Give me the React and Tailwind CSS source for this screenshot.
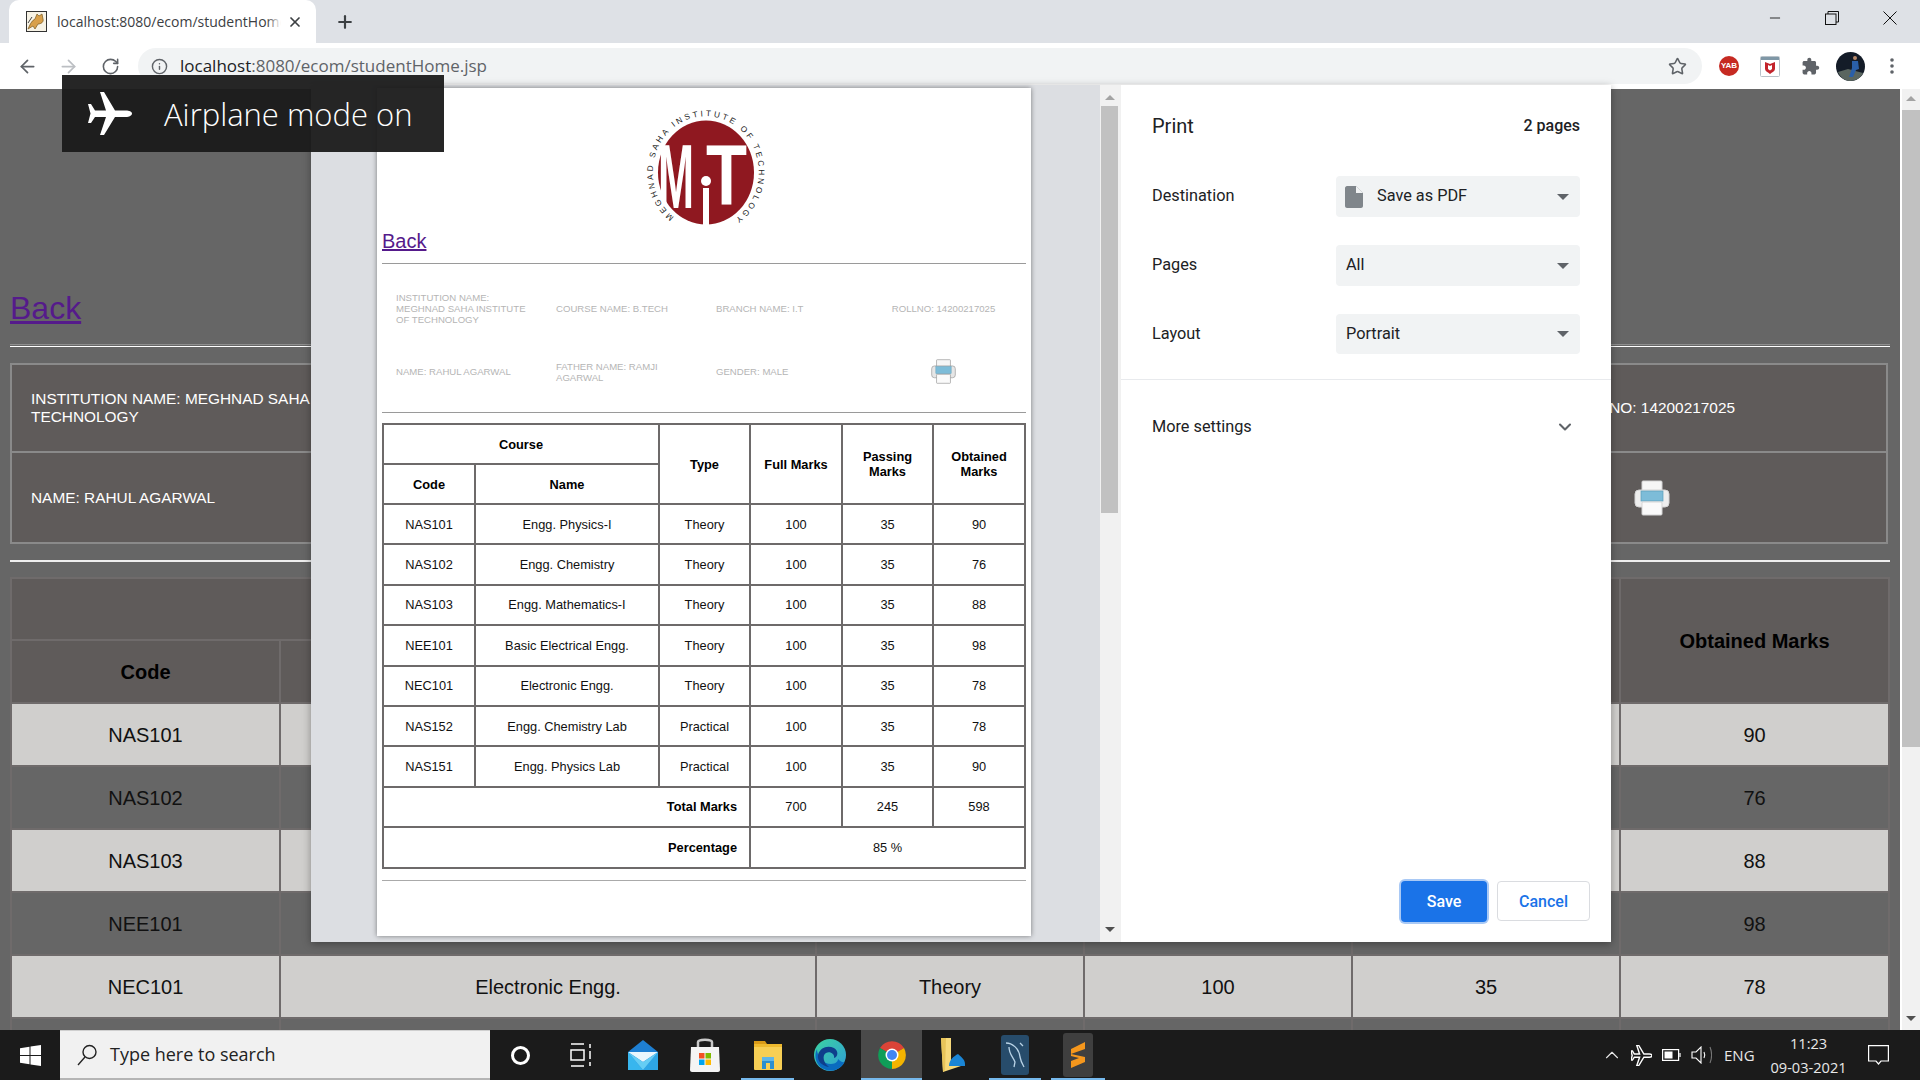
import React from "react";
import { ArrowLeft, ArrowRight, RotateCw, Info, Star, X, Plus, Minus, ChevronDown, ChevronUp } from "lucide-react";

const rows = [
  ["NAS101", "Engg. Physics-I", "Theory", "100", "35", "90"],
  ["NAS102", "Engg. Chemistry", "Theory", "100", "35", "76"],
  ["NAS103", "Engg. Mathematics-I", "Theory", "100", "35", "88"],
  ["NEE101", "Basic Electrical Engg.", "Theory", "100", "35", "98"],
  ["NEC101", "Electronic Engg.", "Theory", "100", "35", "78"],
  ["NAS152", "Engg. Chemistry Lab", "Practical", "100", "35", "78"],
  ["NAS151", "Engg. Physics Lab", "Practical", "100", "35", "90"],
];

const planePath =
  "M44 21.5C44 19.5 41 18.5 38 18.5H27L16 0H12L18 18.5H7L3 12H0L2.5 21.5L0 31H3L7 25H18L12 43H16L27 25H38C41 25 44 23.5 44 21.5Z";

function PrinterIcon({ size, outline }) {
  const s = outline ? "#9a9a9a" : "#d5d5d5";
  return (
    <svg width={size} height={size} viewBox="0 0 36 36">
      <rect x="8" y="1" width="20" height="12" rx="1" fill="#f6f6f6" stroke={s} strokeWidth="1" />
      <rect x="1" y="10" width="34" height="17" rx="4" fill={outline ? "#e6e6e6" : "#eeeeee"} stroke={s} strokeWidth="1" />
      <rect x="7" y="11" width="22" height="10" fill="#7dbcd8" stroke="#5b9db9" strokeWidth="0.7" />
      <rect x="8" y="22" width="20" height="13" rx="1" fill="#fafafa" stroke={s} strokeWidth="1" />
    </svg>
  );
}

function Logo() {
  return (
    <svg width="150" height="135" viewBox="0 0 150 135" className="block mx-auto overflow-visible">
      <defs>
        <path id="ringPath" d="M45 117A53 56 0 1 1 101 122" />
      </defs>
      <ellipse cx="77" cy="72.5" rx="48" ry="52" fill="#8f1820" />
      <text x="29" y="108" fill="#ffffff" fontFamily="'Liberation Sans'" fontWeight="700" fontSize="91" textLength="36" lengthAdjust="spacingAndGlyphs">M</text>
      <text x="77" y="104" fill="#ffffff" fontFamily="'Liberation Sans'" fontWeight="700" fontSize="86" textLength="41" lengthAdjust="spacingAndGlyphs">T</text>
      <circle cx="77" cy="81" r="5" fill="#ffffff" />
      <rect x="74" y="88" width="6" height="37" fill="#ffffff" />
      <text fontFamily="'Liberation Sans'" fontSize="8.2" fill="#222222">
        <textPath href="#ringPath" textLength="276">MEGHNAD SAHA INSTITUTE OF TECHNOLOGY</textPath>
      </text>
    </svg>
  );
}

function TomcatFavicon() {
  return (
    <svg width="21" height="21" viewBox="0 0 21 21">
      <rect x="0.5" y="0.5" width="20" height="20" fill="#f7f3e6" stroke="#333" />
      <path d="M2 18C4 14 5 10 9 8L11 3L13 5L16 3L17 8C18 11 15 13 12 13L9 18L7 15Z" fill="#d9a04a" stroke="#7a5a22" strokeWidth="0.7" />
      <path d="M2 12L6 6" stroke="#444" strokeWidth="1" />
    </svg>
  );
}

function Dropdown({ label, value, file, tall }) {
  return (
    <div className={`flex items-center ${tall}`}>
      <div className="w-[184px] text-[16.3px] text-[#202124]">{label}</div>
      <div className="w-[244px] h-full rounded-[4px] bg-[#f1f3f4] flex items-center pl-[10px] pr-[11px] text-[16.3px] text-[#202124]">
        {file && (
          <svg width="18" height="22" viewBox="0 0 18 22" className="mr-[14px] -ml-[1px]">
            <path d="M2 0H11L18 7V20C18 21 17 22 16 22H2C1 22 0 21 0 20V2C0 1 1 0 2 0Z" fill="#80868b" />
            <path d="M11 0V7H18Z" fill="#f1f3f4" />
          </svg>
        )}
        <span className="flex-1">{value}</span>
        <svg width="12" height="6" viewBox="0 0 12 6"><path d="M0 0H12L6 6Z" fill="#5f6368" /></svg>
      </div>
    </div>
  );
}

function TaskIcon({ width = "w-[61px]", children, active, line }) {
  return (
    <div className={`relative h-full flex items-center justify-center ${width} ${active ? "bg-[#4a4a4a]" : ""}`}>
      {children}
      {line && <div className="absolute bottom-0 left-[5px] right-[5px] h-[2px] bg-[#76b9ed]" />}
    </div>
  );
}

export default function App() {
  const ui = "font-['Open_Sans',sans-serif]";
  const roboto = "font-['Roboto',sans-serif]";
  const hdr = "border-2 border-[#6f6b6b] bg-[#5f5b5a] text-[20px] font-bold text-black text-center";
  const thP = "border-2 border-[#6d6a6a] font-bold text-center text-black leading-[15px] p-0";
  const tdP = "border-2 border-[#6d6a6a] text-center text-[#111] p-0";

  return (
    <div className="relative w-[1920px] h-[1080px] overflow-hidden flex flex-col bg-white font-['Liberation_Sans',Arial,sans-serif]">
      {/* Tab strip */}
      <div className={`h-[43px] bg-[#dee1e6] flex items-stretch shrink-0 ${ui}`}>
        <div className="ml-[9px] w-[307px] bg-white rounded-t-[10px] flex items-center pl-[17px] pr-[11px]">
          <TomcatFavicon />
          <div className="relative ml-[10px] w-[224px] overflow-hidden whitespace-nowrap text-[14px] text-[#3c4043]">
            localhost:8080/ecom/studentHome.jsp
            <div className="absolute right-0 top-0 bottom-0 w-[14px] bg-gradient-to-r from-transparent to-white" />
          </div>
          <X size={16} strokeWidth={2.6} className="ml-[6px] text-[#3c4043]" />
        </div>
        <div className="ml-[19px] flex items-center"><Plus size={20} strokeWidth={2.6} className="text-[#3c4043]" /></div>
        <div className="flex-1" />
        <div className="flex items-center text-[#111] pb-[7px]">
          <Minus size={16} strokeWidth={1.3} className="mr-[42px]" />
          <svg width="14" height="14" viewBox="0 0 14 14" className="mr-[44px]" fill="none" stroke="#111"><rect x="0.5" y="3" width="10.5" height="10.5" /><path d="M3 3V0.5H13.5V11H11" /></svg>
          <svg width="14" height="14" viewBox="0 0 14 14" className="mr-[23px]" stroke="#111"><path d="M0.5 0.5L13.5 13.5M13.5 0.5L0.5 13.5" /></svg>
        </div>
      </div>
      {/* Toolbar */}
      <div className={`h-[46px] bg-white flex items-center shrink-0 ${ui}`}>
        <ArrowLeft size={21} className="ml-[17px] text-[#5f6368]" />
        <ArrowRight size={21} className="ml-[20px] text-[#bcbfc3]" />
        <RotateCw size={19} className="ml-[22px] text-[#5f6368]" />
        <div className="ml-[18px] w-[1564px] h-[36px] rounded-full bg-[#f1f3f4] flex items-center pl-[13px] pr-[15px]">
          <Info size={17} className="text-[#5f6368]" />
          <span className="ml-[12px] flex-1 text-[17px] text-[#5f6368]"><span className="text-[#202124]">localhost</span>:8080/ecom/studentHome.jsp</span>
          <Star size={19} className="text-[#5f6368]" />
        </div>
        <div className="ml-[17px] w-[20px] h-[20px] rounded-full bg-[#c62a22] text-white text-[8px] font-bold flex items-center justify-center font-['Liberation_Sans']">YAB</div>
        <svg width="20" height="21" viewBox="0 0 20 21" className="ml-[21px]">
          <rect x="0.5" y="0.5" width="19" height="20" rx="1" fill="#fff" stroke="#b9c2c9" />
          <rect x="1" y="1" width="18" height="3" fill="#7f97a6" />
          <path d="M5 6L10 8L15 6V13C15 15 12 16.5 10 18C8 16.5 5 15 5 13Z" fill="#c3242c" />
          <path d="M8 9L10 10L12 9V13L10 14.5L8 13Z" fill="#fff" />
        </svg>
        <svg width="19" height="19" viewBox="0 0 24 24" className="ml-[21px]" fill="#5f6368"><path d="M20.5 11H19V7c0-1.1-.9-2-2-2h-4V3.5C13 2.12 11.88 1 10.5 1S8 2.12 8 3.5V5H4c-1.1 0-1.99.9-1.99 2v3.8H3.5c1.49 0 2.7 1.21 2.7 2.7s-1.21 2.7-2.7 2.7H2V20c0 1.1.9 2 2 2h3.8v-1.5c0-1.49 1.21-2.7 2.7-2.7 1.49 0 2.7 1.21 2.7 2.7V22H17c1.1 0 2-.9 2-2v-4h1.5c1.38 0 2.5-1.12 2.5-2.5S21.88 11 20.5 11z" /></svg>
        <svg width="29" height="29" viewBox="0 0 29 29" className="ml-[16px]">
          <circle cx="14.5" cy="14.5" r="14.5" fill="#141c28" />
          <path d="M2 20L12 17L27 21C25 26 19 29 14 29C9 29 4 25 2 20Z" fill="#5a6660" />
          <circle cx="19" cy="6" r="2" fill="#b98a6a" />
          <path d="M16 9H22L23 17L20 18L17 25H13L16 16Z" fill="#2a5fa8" />
        </svg>
        <svg width="4" height="16" viewBox="0 0 4 16" className="ml-[25px]" fill="#5f6368"><circle cx="2" cy="2" r="1.8" /><circle cx="2" cy="8" r="1.8" /><circle cx="2" cy="14" r="1.8" /></svg>
      </div>

      {/* Page */}
      <div className="flex-1 min-h-0 flex bg-[#666666]">
        <div className="w-[1900px] h-[941px] overflow-hidden px-[10px] pt-[201px]">
          <a className="block text-[32px] leading-[37px] text-[#551a8b] underline decoration-[3px]">Back</a>
          <div className="mt-[17px] w-[1880px] h-[3px] border-t border-b border-t-[#8f8f8f] border-b-white" />
          <table className="mt-[16px] w-[1878px] table-fixed border-collapse border-2 border-[#8a8a8a] bg-[#5f5b5a] text-white text-[15.4px] leading-[18px]">
            <tbody>
              <tr className="h-[88px] border-b-2 border-[#8a8a8a]">
                <td className="pl-[19px] pr-[10px]">INSTITUTION NAME: MEGHNAD SAHA INSTITUTE OF TECHNOLOGY</td>
                <td className="pl-[19px]">COURSE NAME: B.TECH</td>
                <td className="pl-[19px]">BRANCH NAME: I.T</td>
                <td className="text-center">ROLLNO: 14200217025</td>
              </tr>
              <tr className="h-[91px]">
                <td className="pl-[19px]">NAME: RAHUL AGARWAL</td>
                <td className="pl-[19px]">FATHER NAME: RAMJI AGARWAL</td>
                <td className="pl-[19px]">GENDER: MALE</td>
                <td><div className="flex justify-center"><PrinterIcon size={36} /></div></td>
              </tr>
            </tbody>
          </table>
          <div className="mt-[16px] w-[1880px] h-[2px] bg-[#eeeeee]" />
          <table className="mt-[15px] w-[1878px] table-fixed border-collapse">
            <colgroup>
              <col className="w-[269px]" /><col className="w-[536px]" /><col className="w-[268px]" /><col className="w-[268px]" /><col className="w-[268px]" /><col className="w-[269px]" />
            </colgroup>
            <tbody>
              <tr className="h-[62px]">
                <td colSpan={2} className={hdr}>Course</td>
                <td rowSpan={2} className={hdr}>Type</td>
                <td rowSpan={2} className={hdr}>Full Marks</td>
                <td rowSpan={2} className={hdr}>Passing Marks</td>
                <td rowSpan={2} className={hdr}>Obtained Marks</td>
              </tr>
              <tr className="h-[63px]">
                <td className={hdr}>Code</td>
                <td className={hdr}>Name</td>
              </tr>
              {rows.map((r, i) => (
                <tr key={r[0]} className={`h-[63px] text-[20px] text-center text-[#111] ${i % 2 === 0 ? "bg-[#d0cfcd]" : "bg-[#666666]"}`}>
                  {r.map((c, j) => (
                    <td key={j} className="border-2 border-[#6f6b6b]">{c}</td>
                  ))}
                </tr>
              ))}
            </tbody>
          </table>
        </div>
        <div className="w-[2px] bg-white" />
        <div className="w-[18px] bg-[#f1f1f1] flex flex-col items-center pt-[7px]">
          <svg width="10" height="5" viewBox="0 0 10 5"><path d="M5 0L10 5H0Z" fill="#a3a3a3" /></svg>
          <div className="mt-[9px] w-full h-[637px] bg-[#c1c1c1]" />
          <svg width="10" height="5" viewBox="0 0 10 5" className="mt-[269px]"><path d="M0 0H10L5 5Z" fill="#505050" /></svg>
        </div>
      </div>

      {/* Taskbar */}
      <div className={`h-[50px] shrink-0 bg-[#1b1b1b] flex items-center text-white ${ui}`}>
        <div className="w-[60px] h-full flex items-center justify-center">
          <svg width="21" height="21" viewBox="0 0 21 21" fill="#fff"><path d="M0 3.2L9.5 1.8V10H0ZM10.5 1.6L21 0V10H10.5ZM0 11H9.5V19.2L0 17.8ZM10.5 11H21V21L10.5 19.4Z" /></svg>
        </div>
        <div className="w-[430px] h-full bg-[#f1f1f1] border-t border-b-2 border-t-[#cfcfcf] border-b-[#b5b5b5] flex items-center pl-[15px] text-[18px] text-[#222]">
          <svg width="24" height="24" viewBox="0 0 24 24" fill="none" stroke="#222" strokeWidth="1.4"><circle cx="14.5" cy="9" r="6.5" /><path d="M10 14L3 22" /></svg>
          <span className="ml-[11px]">Type here to search</span>
        </div>
        <div className="w-[370px] flex h-full ml-[1px]">
          <TaskIcon width="w-[59px]"><div className="w-[19px] h-[19px] rounded-full border-[3px] border-white" /></TaskIcon>
          <TaskIcon width="w-[62px]">
            <svg width="22" height="24" viewBox="0 0 22 24" fill="none" stroke="#fff" strokeWidth="1.5"><path d="M1 1H14M1 23H14M1 7H14V17H1ZM20 1V5M20 8V16M20 19V23" /></svg>
          </TaskIcon>
          <TaskIcon width="w-[62px]">
            <svg width="30" height="30" viewBox="0 0 30 30">
              <path d="M15 0L30 12V30H0V12Z" fill="#1e7fd2" />
              <path d="M0 12H30L15 22Z" fill="#eaf6fd" />
              <path d="M0 12L15 30H0Z" fill="#38b6ee" />
              <path d="M30 12V30H15Z" fill="#2ea6e6" />
              <path d="M15 22L30 12L15 30L0 12Z" fill="#65cdf4" />
            </svg>
          </TaskIcon>
          <TaskIcon width="w-[62px]">
            <svg width="30" height="34" viewBox="0 0 30 34">
              <path d="M8 10V4C8 1 22 1 22 4V10" fill="none" stroke="#c9c9c9" strokeWidth="2.5" />
              <path d="M1 9H29L30 32C30 33 29 34 28 34H2C1 34 0 33 0 32Z" fill="#f4f4f4" />
              <rect x="9" y="15" width="5.5" height="5.5" fill="#f25022" /><rect x="15.5" y="15" width="5.5" height="5.5" fill="#7fba00" /><rect x="9" y="21.5" width="5.5" height="5.5" fill="#00a4ef" /><rect x="15.5" y="21.5" width="5.5" height="5.5" fill="#ffb900" />
            </svg>
          </TaskIcon>
          <TaskIcon width="w-[63px]" line>
            <svg width="28" height="30" viewBox="0 0 28 30">
              <path d="M0 1H11L13 4H0Z" fill="#d99a17" />
              <rect x="0" y="4" width="28" height="26" rx="1" fill="#f7cf55" />
              <rect x="0" y="4" width="28" height="3" fill="#eeb92e" />
              <path d="M8 19H20V29H16V23H12V29H8Z" fill="#2a8fd0" />
              <rect x="8" y="17" width="12" height="4" fill="#5fb6e8" />
            </svg>
          </TaskIcon>
          <TaskIcon width="w-[62px]">
            <svg width="32" height="32" viewBox="0 0 32 32">
              <defs>
                <linearGradient id="edgeA" x1="0" y1="0" x2="1" y2="1"><stop offset="0" stopColor="#3bd4a0" /><stop offset="1" stopColor="#2f9bd8" /></linearGradient>
              </defs>
              <circle cx="16" cy="16" r="16" fill="url(#edgeA)" />
              <path d="M31 22C28 30 18 34 10 30C3 27 -1 18 3 10C3 17 9 25 17 25C22 25 24 22 24 20C28 24 30 24 31 22Z" fill="#0a6bbf" />
              <path d="M4 16C6 8 14 6 20 9C25 12 24 18 20 19C21 15 16 12 12 14C8 16 9 24 15 28C8 27 3 22 4 16Z" fill="#0e3f8c" />
            </svg>
          </TaskIcon>
        </div>
        <TaskIcon width="w-[61px]" active>
          <svg width="28" height="28" viewBox="0 0 28 28">
            <path d="M14 14L2 7A14 14 0 0 1 26 7Z" fill="#db4437" />
            <path d="M14 14L26 7A14 14 0 0 1 14 28Z" fill="#f4b400" />
            <path d="M14 14L14 28A14 14 0 0 1 2 7Z" fill="#0f9d58" />
            <circle cx="14" cy="14" r="6.5" fill="#fff" />
            <circle cx="14" cy="14" r="5" fill="#4285f4" />
          </svg>
          <div className="absolute bottom-0 left-0 right-0 h-[2px] bg-[#76b9ed]" />
        </TaskIcon>
        <TaskIcon width="w-[62px]">
          <svg width="28" height="34" viewBox="0 0 28 34">
            <path d="M2 0H12V22L22 22V28L4 34Z" fill="#f7d97a" />
            <path d="M2 0H7L6 32L4 34Z" fill="#e8c45a" />
            <path d="M10 28C10 22 15 18 19 16C21 18 26 21 26 26V28Z" fill="#1b86d6" />
          </svg>
        </TaskIcon>
        <TaskIcon width="w-[62px]" line>
          <div className="w-[28px] h-[40px] rounded-[3px] bg-[#274c6b] flex items-center justify-center">
            <svg width="22" height="30" viewBox="0 0 22 30" fill="none" stroke="#b9d3e6" strokeWidth="1.3"><path d="M2 3C8 3 15 8 16 17C17 22 19 25 20 27M16 3L19 6M5 7C5 14 9 17 11 22L10 27" /></svg>
          </div>
        </TaskIcon>
        <TaskIcon width="w-[64px]" line>
          <div className="w-[30px] h-[44px] rounded-[3px] bg-[#3f3f3f] flex items-center justify-center">
            <svg width="16" height="26" viewBox="0 0 16 26"><path d="M15 0V7L1 12V7ZM1 12L15 15V20L1 26V19L9 16L1 14Z" fill="#f5971d" /></svg>
          </div>
        </TaskIcon>
        <div className="flex-1 h-full flex items-center text-[#e8e8e8]">
          <ChevronUp size={22} strokeWidth={1.2} className="ml-[491px]" />
          <svg width="21" height="21" viewBox="0 0 44 43" className="ml-[8px]" fill="none" stroke="#fff" strokeWidth="3"><path d={planePath} /></svg>
          <svg width="19" height="12" viewBox="0 0 19 12" className="ml-[10px]" fill="none" stroke="#fff" strokeWidth="1.2"><rect x="0.6" y="0.6" width="16" height="10.8" /><rect x="2.5" y="2.5" width="8" height="7" fill="#fff" stroke="none" /><path d="M18 4V8" /></svg>
          <svg width="21" height="18" viewBox="0 0 21 18" className="ml-[10px]" fill="none" stroke="#fff" strokeWidth="1.1"><path d="M1 6H5L10 1V17L5 12H1Z" /><path d="M13 6C14 8 14 10 13 12" /><path d="M19 1C21 6 21 12 19 17" stroke="#777" /></svg>
          <span className="ml-[12px] text-[15px]">ENG</span>
          <div className="ml-[13px] w-[82px] text-center text-[14.6px] leading-[24px]">11:23<br />09-03-2021</div>
          <svg width="21" height="21" viewBox="0 0 21 21" className="ml-[18px]" fill="none" stroke="#fff" strokeWidth="1.2"><path d="M0.6 0.6H20.4V16H13L10.5 19L8 16H0.6Z" /></svg>
        </div>
      </div>

      {/* Print dialog */}
      <div className="absolute left-[311px] top-[85px] w-[1300px] h-[857px] flex bg-white shadow-[0_2px_8px_rgba(0,0,0,0.35)]">
        <div className="w-[789px] h-full bg-[#dcdee2]">
          <div className="ml-[66px] mt-[3px] w-[654px] h-[848px] bg-white shadow-[0_0_5px_rgba(0,0,0,0.45)] px-[5px] pt-[12px] overflow-hidden">
            <Logo />
            <a className="block -mt-[6px] text-[20px] leading-[24px] text-[#551a8b] underline decoration-2">Back</a>
            <div className="mt-[10px] h-px bg-[#9a9a9a]" />
            <table className="mt-[13px] w-[643px] table-fixed border-collapse text-[9.6px] leading-[11px] text-[#b5b5b5]">
              <colgroup><col className="w-[160px]" /><col className="w-[160px]" /><col className="w-[160px]" /><col className="w-[163px]" /></colgroup>
              <tbody>
                <tr className="h-[63px]">
                  <td className="pl-[14px] pr-[8px]">INSTITUTION NAME: MEGHNAD SAHA INSTITUTE OF TECHNOLOGY</td>
                  <td className="pl-[14px]">COURSE NAME: B.TECH</td>
                  <td className="pl-[14px]">BRANCH NAME: I.T</td>
                  <td className="text-center">ROLLNO: 14200217025</td>
                </tr>
                <tr className="h-[63px]">
                  <td className="pl-[14px]">NAME: RAHUL AGARWAL</td>
                  <td className="pl-[14px] pr-[30px]">FATHER NAME: RAMJI AGARWAL</td>
                  <td className="pl-[14px]">GENDER: MALE</td>
                  <td><div className="flex justify-center"><PrinterIcon size={25} outline /></div></td>
                </tr>
              </tbody>
            </table>
            <div className="mt-[9px] h-px bg-[#9a9a9a]" />
            <table className="mt-[10px] w-[642px] table-fixed border-collapse border-2 border-[#6d6a6a] text-[12.8px]">
              <colgroup><col className="w-[92px]" /><col className="w-[184px]" /><col className="w-[91px]" /><col className="w-[92px]" /><col className="w-[91px]" /><col className="w-[92px]" /></colgroup>
              <tbody>
                <tr className="h-[40px]">
                  <td colSpan={2} className={thP}>Course</td>
                  <td rowSpan={2} className={thP}>Type</td>
                  <td rowSpan={2} className={thP}>Full Marks</td>
                  <td rowSpan={2} className={thP}>Passing<br />Marks</td>
                  <td rowSpan={2} className={thP}>Obtained<br />Marks</td>
                </tr>
                <tr className="h-[40px]"><td className={thP}>Code</td><td className={thP}>Name</td></tr>
                {rows.map((r) => (
                  <tr key={r[0]} className="h-[40.4px]">
                    {r.map((c, j) => <td key={j} className={tdP}>{c}</td>)}
                  </tr>
                ))}
                <tr className="h-[40.4px]">
                  <td colSpan={3} className={`${thP} pr-[12px]`}><div className="text-right">Total Marks</div></td>
                  <td className={tdP}>700</td><td className={tdP}>245</td><td className={tdP}>598</td>
                </tr>
                <tr className="h-[40.4px]">
                  <td colSpan={3} className={`${thP} pr-[12px]`}><div className="text-right">Percentage</div></td>
                  <td colSpan={3} className={tdP}>85 %</td>
                </tr>
              </tbody>
            </table>
            <div className="mt-[11px] h-px bg-[#aaaaaa]" />
          </div>
        </div>
        <div className="w-[21px] h-full bg-[#f1f1f1] flex flex-col items-center pt-[10px] pr-[2px]">
          <svg width="10" height="5" viewBox="0 0 10 5"><path d="M5 0L10 5H0Z" fill="#a3a3a3" /></svg>
          <div className="mt-[6px] w-[17px] h-[407px] bg-[#c1c1c1]" />
          <svg width="10" height="5" viewBox="0 0 10 5" className="mt-[414px]"><path d="M0 0H10L5 5Z" fill="#505050" /></svg>
        </div>
        <div className={`flex-1 flex flex-col h-full text-[#202124] ${roboto}`}>
          <div className="pl-[31px] pr-[31px] pt-[27px] h-[91px] flex items-start justify-between">
            <span className="text-[20px] leading-[28px]">Print</span>
            <span className="text-[16px] leading-[28px] font-medium">2 pages</span>
          </div>
          <div className="pl-[31px] flex flex-col">
            <Dropdown label="Destination" value="Save as PDF" file tall="h-[41px]" />
            <div className="mt-[28px]"><Dropdown label="Pages" value="All" tall="h-[41px]" /></div>
            <div className="mt-[28px]"><Dropdown label="Layout" value="Portrait" tall="h-[40px]" /></div>
          </div>
          <div className="mt-[25px] h-px bg-[#e8eaed]" />
          <div className="pl-[31px] pr-[36px] mt-[37px] flex items-center justify-between text-[16.3px] leading-[20px]">
            <span>More settings</span>
            <ChevronDown size={20} strokeWidth={2.5} className="text-[#5f6368]" />
          </div>
          <div className="flex-1" />
          <div className="flex justify-end gap-[10px] pr-[21px] pb-[20px]">
            <button className="w-[86px] h-[41px] rounded-[4px] bg-[#1a73e8] text-white text-[16px] font-medium shadow-[0_0_0_2px_#a9c9f5]">Save</button>
            <button className="w-[93px] h-[40px] pt-[1px] rounded-[4px] bg-white border border-[#dadce0] text-[#1a73e8] text-[16px] font-medium">Cancel</button>
          </div>
        </div>
      </div>

      {/* Toast */}
      <div className={`absolute left-[62px] top-[75px] w-[382px] h-[77px] bg-[#1a1a1a]/95 flex items-center text-white ${ui}`}>
        <svg width="44" height="43" viewBox="0 0 44 43" className="ml-[26px]" fill="#fff"><path d={planePath} /></svg>
        <span className="ml-[32px] pt-[2px] text-[31px] font-light">Airplane mode on</span>
      </div>
    </div>
  );
}
